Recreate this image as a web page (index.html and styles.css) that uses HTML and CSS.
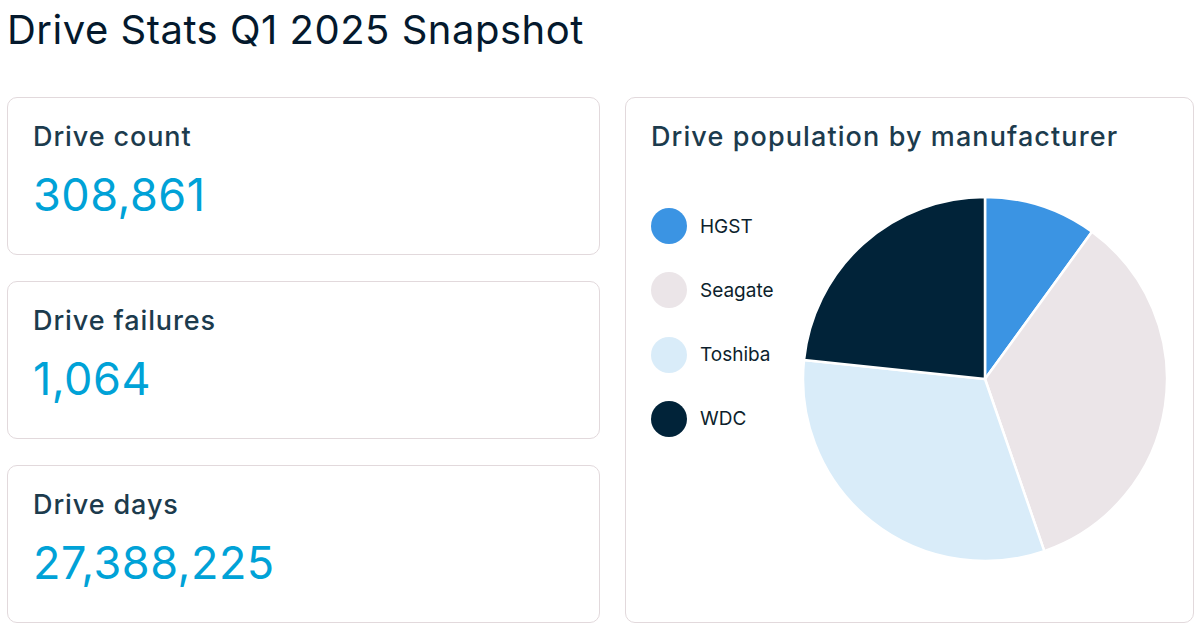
FILE: index.html
```html
<!DOCTYPE html>
<html lang="en">
<head>
<meta charset="utf-8">
<title>Drive Stats Q1 2025 Snapshot</title>
<link rel="stylesheet" href="styles.css">
</head>
<body>
<h1 class="page-title">Drive Stats Q1 2025 Snapshot</h1>
<main class="dashboard">
  <section class="stats">
    <div class="card stat">
      <h2 class="card-label">Drive count</h2>
      <p class="stat-value">308,861</p>
    </div>
    <div class="card stat">
      <h2 class="card-label">Drive failures</h2>
      <p class="stat-value">1,064</p>
    </div>
    <div class="card stat">
      <h2 class="card-label">Drive days</h2>
      <p class="stat-value">27,388,225</p>
    </div>
  </section>
  <section class="card chart-card">
    <h2 class="card-label chart-title">Drive population by manufacturer</h2>
    <div class="chart">
      <ul class="legend">
        <li class="legend-item"><span class="swatch swatch-hgst"></span>HGST</li>
        <li class="legend-item"><span class="swatch swatch-seagate"></span>Seagate</li>
        <li class="legend-item"><span class="swatch swatch-toshiba"></span>Toshiba</li>
        <li class="legend-item"><span class="swatch swatch-wdc"></span>WDC</li>
      </ul>
      <svg class="pie" width="366" height="366" viewBox="0 0 366 366">
        <g stroke="#ffffff" stroke-width="2.5" stroke-linejoin="round">
          <path fill="#3b94e3" d="M183,183 L183,1 A182,182 0 0 1 290,35.8 Z"/>
          <path fill="#ebe5e8" d="M183,183 L290,35.8 A182,182 0 0 1 242.3,355.1 Z"/>
          <path fill="#d9ecf9" d="M183,183 L242.3,355.1 A182,182 0 0 1 2,164 Z"/>
          <path fill="#012339" d="M183,183 L2,164 A182,182 0 0 1 183,1 Z"/>
        </g>
      </svg>
    </div>
  </section>
</main>
</body>
</html>
```

FILE: styles.css
```css
* { box-sizing: border-box; }

body {
  margin: 0;
  padding: 0 6px 0 7px;
  background: #ffffff;
  font-family: Inter, "Noto Sans", "Liberation Sans", sans-serif;
  color: #0a1d30;
}

.page-title {
  margin: 7px 0 0;
  font-size: 40px;
  line-height: 46px;
  font-weight: 400;
  color: #04192d;
  letter-spacing: 0.5px;
}

.dashboard {
  margin-top: 44px;
  display: grid;
  grid-template-columns: 593px 1fr;
  column-gap: 25px;
  height: 526px;
}

.stats {
  display: grid;
  grid-template-rows: repeat(3, 1fr);
  row-gap: 26px;
}

.card {
  border: 1px solid #e2d9dc;
  border-radius: 10px;
  background: #fff;
  padding: 23px 25px;
}

.card-label {
  margin: 0;
  font-size: 27px;
  line-height: 32px;
  font-weight: 500;
  color: #1c3b4d;
  letter-spacing: 0.9px;
}

.chart-title {
  letter-spacing: 1.1px;
}

.stat-value {
  margin: 15px 0 0;
  font-size: 45px;
  line-height: 54px;
  font-weight: 400;
  color: #00a2d7;
  letter-spacing: 0.5px;
}

.chart-card {
  display: flex;
  flex-direction: column;
}

.chart {
  margin-top: 43px;
  display: flex;
  justify-content: space-between;
  align-items: flex-start;
}

.legend {
  list-style: none;
  margin: 12px 0 0;
  padding: 0;
  display: flex;
  flex-direction: column;
  gap: 28.3px;
}

.legend-item {
  display: flex;
  align-items: center;
  gap: 13px;
  height: 36px;
  font-size: 19px;
  color: #0d1f2d;
}

.swatch {
  width: 36px;
  height: 36px;
  border-radius: 50%;
  flex: none;
}

.swatch-hgst { background: #3b94e3; }
.swatch-seagate { background: #ebe5e8; }
.swatch-toshiba { background: #d9ecf9; }
.swatch-wdc { background: #012339; }

.pie {
  display: block;
  flex: none;
  margin-right: 0;
}
```
